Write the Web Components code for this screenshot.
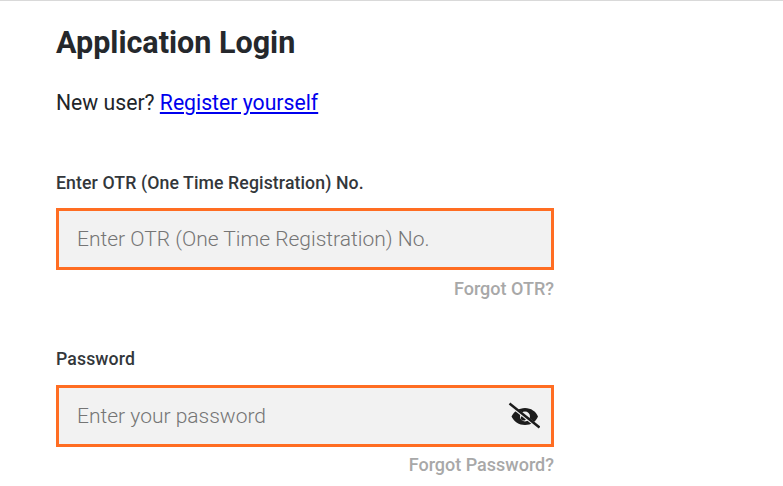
<!DOCTYPE html>
<html>
<head>
<meta charset="utf-8">
<style>
    html, body { margin: 0; height: 100%; background: #fff; overflow: hidden; }
    body { font-family: Roboto, "Liberation Sans", sans-serif; color: #212529; }
</style>
</head>
<body>
<login-screen></login-screen>

<script>
class LoginField extends HTMLElement {
    constructor() {
        super();
        this.shadowDom = this.attachShadow({ mode: 'open' });
        this.shadowDom.innerHTML = `
            <style>
                :host { display: block; }
                .label {
                    font-size: 17.7px;
                    font-weight: 500;
                    line-height: 20px;
                    letter-spacing: 0.1px;
                    color: #33373b;
                    margin-bottom: var(--label-gap, 15px);
                    margin-top: 2px;
                }
                .box {
                    box-sizing: border-box;
                    height: 62px;
                    display: flex;
                    align-items: center;
                    gap: 8px;
                    border: 3px solid #ff6d22;
                    background: #f2f2f2;
                    padding: 0 11px 0 18px;
                }
                input {
                    flex: 1;
                    min-width: 0;
                    border: 0;
                    outline: 0;
                    padding: 0;
                    background: transparent;
                    font: 300 21px Roboto, sans-serif;
                    color: #212529;
                }
                input::placeholder { color: #757575; opacity: 1; }
                .forgot {
                    text-align: right;
                    font-size: 18px;
                    font-weight: 500;
                    line-height: 20px;
                    color: #a8a8a8;
                    margin-top: var(--forgot-gap, 9px);
                }
                ::slotted(svg) { display: block; }
            </style>
            <div class="label"></div>
            <div class="box">
                <input type="text">
                <slot></slot>
            </div>
            <div class="forgot"></div>
        `
        this.shadowDom.querySelector('.label').textContent = this.getAttribute('label');
        this.shadowDom.querySelector('input').placeholder = this.getAttribute('placeholder');
        this.shadowDom.querySelector('.forgot').textContent = this.getAttribute('forgot');
    }
}

class LoginScreen extends HTMLElement {
    constructor() {
        super();
        this.shadowDom = this.attachShadow({ mode: 'open' });
        this.shadowDom.innerHTML = `
            <style>
                :host {
                    display: block;
                    box-sizing: border-box;
                    height: 486px;
                    border-top: 1px solid #d9d9d9;
                    padding: 0 229px 0 56px;
                }
                .title {
                    margin: 0;
                    padding-top: 23px;
                    font-size: 30.5px;
                    font-weight: 700;
                    line-height: 38px;
                    color: #25282c;
                }
                .new-user {
                    margin-top: 28px;
                    font-size: 21.2px;
                    line-height: 26px;
                    color: #212529;
                }
                a { color: #0000ee; }
                #otr { margin-top: 57px; }
                #password { margin-top: 50px; --label-gap: 16px; --forgot-gap: 8px; }
            </style>
            <h1 class="title">Application Login</h1>
            <div class="new-user">New user? <a href="#">Register yourself</a></div>
            <login-field id="otr" label="Enter OTR (One Time Registration) No." placeholder="Enter OTR (One Time Registration) No." forgot="Forgot OTR?"></login-field>
            <login-field id="password" label="Password" placeholder="Enter your password" forgot="Forgot Password?">
                <svg width="32" height="28" viewBox="0 0 32 28">
                    <path fill="#1c1c1c" fill-rule="evenodd" d="M17 6C11 6 6 9.500 3.500 14.500 6 19.500 11 23 17 23s11-3.500 13-8.500C28 9.500 23 6 17 6zm0 3.500a5 5 0 1 1 0 10 5 5 0 0 1 0-10z"/>
                    <circle cx="15.500" cy="16" r="2.600" fill="#1c1c1c"/>
                    <path stroke="#f2f2f2" stroke-width="3.400" d="M4 4.500L30 25"/>
                    <path stroke="#1c1c1c" stroke-width="2.400" d="M1.500 1.500L31.500 25.500"/>
                </svg>
            </login-field>
        `
    }
}

window.customElements.define('login-field', LoginField);
window.customElements.define('login-screen', LoginScreen);
</script>
</body>
</html>
